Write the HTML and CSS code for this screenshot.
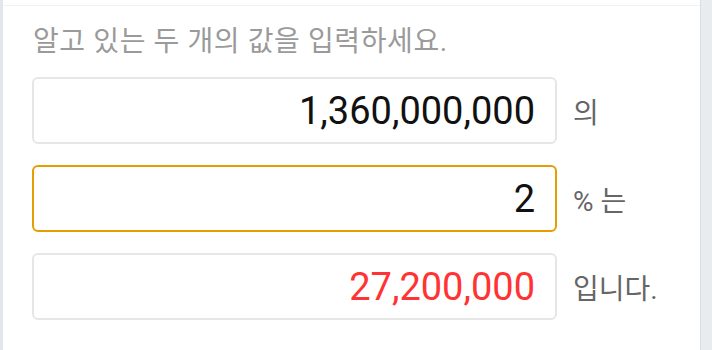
FILE: index.html
```html
<!DOCTYPE html>
<html lang="ko">
<head>
    <meta charset="UTF-8">
    <meta name="viewport" content="width=device-width, initial-scale=1.0">
    <title>퍼센트 계산기</title>
    <link rel="stylesheet" href="styles.css">
</head>
<body>
    <div id="panel">
        <div class="panel-top"></div>
        <div class="calc">
            <p class="hint">알고 있는 두 개의 값을 입력하세요.</p>
            <div class="row">
                <input class="field" type="text" value="1,360,000,000">
                <span class="unit">의</span>
            </div>
            <div class="row">
                <input class="field active" type="text" value="2">
                <span class="unit">% 는</span>
            </div>
            <div class="row">
                <input class="field result" type="text" value="27,200,000" readonly>
                <span class="unit">입니다.</span>
            </div>
        </div>
    </div>
</body>
</html>
```

FILE: styles.css
```css
* {
    margin: 0;
    padding: 0;
    box-sizing: border-box;
}

body {
    background: #e9ecef;
    font-family: Roboto, 'Noto Sans CJK KR', sans-serif;
    height: 350px;
    overflow: hidden;
}

#panel {
    width: 701px;
    height: 350px;
    background: #fff;
    border-left: 3px solid #e3e6ea;
    border-right: 1px solid #dadde1;
}

.panel-top {
    height: 6px;
    border-bottom: 1px solid #f0f1f3;
}

.calc {
    padding: 0 0 0 30px;
}

.hint {
    margin-top: 18px;
    font-size: 28px;
    line-height: 36px;
    letter-spacing: 0.6px;
    color: #9a9a9a;
}

.row {
    display: flex;
    align-items: center;
    margin-top: 21px;
}

.row:first-of-type {
    margin-top: 17px;
}

.field {
    width: 525px;
    height: 67px;
    margin-left: -1px;
    padding: 0 20px;
    border: 2px solid #e6e6e6;
    border-radius: 6px;
    background: #fff;
    font-family: Roboto, sans-serif;
    font-size: 38px;
    color: #111;
    text-align: right;
    outline: none;
}

.field.active {
    border-color: #e79d00;
}

.field.result {
    color: #ff3333;
}

.unit {
    margin-left: 16px;
    font-size: 28px;
    color: #666;
}
```
